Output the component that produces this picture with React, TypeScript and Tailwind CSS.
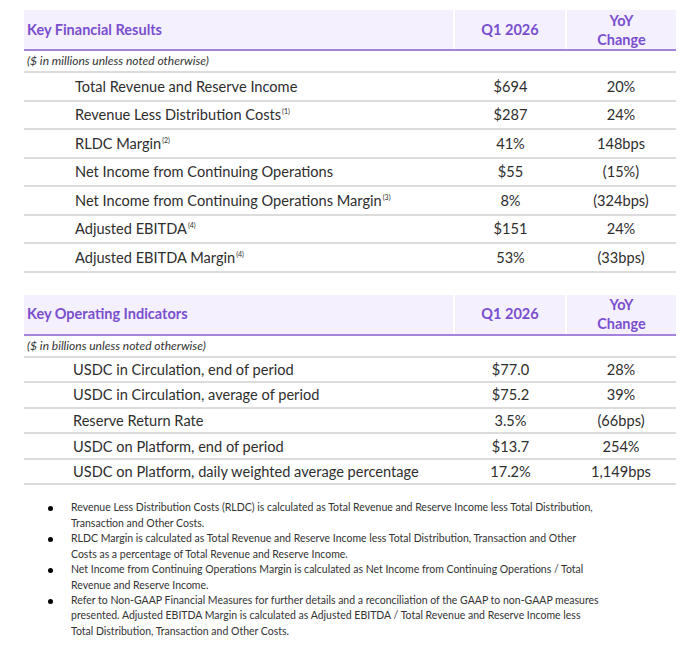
import React from "react"

type Row = { label: string; note?: string; value: string; change: string }

const financial: Row[] = [
  { label: "Total Revenue and Reserve Income", value: "$694", change: "20%" },
  { label: "Revenue Less Distribution Costs", note: "(1)", value: "$287", change: "24%" },
  { label: "RLDC Margin", note: "(2)", value: "41%", change: "148bps" },
  { label: "Net Income from Continuing Operations", value: "$55", change: "(15%)" },
  { label: "Net Income from Continuing Operations Margin", note: "(3)", value: "8%", change: "(324bps)" },
  { label: "Adjusted EBITDA", note: "(4)", value: "$151", change: "24%" },
  { label: "Adjusted EBITDA Margin", note: "(4)", value: "53%", change: "(33bps)" },
]

const operating: Row[] = [
  { label: "USDC in Circulation, end of period", value: "$77.0", change: "28%" },
  { label: "USDC in Circulation, average of period", value: "$75.2", change: "39%" },
  { label: "Reserve Return Rate", value: "3.5%", change: "(66bps)" },
  { label: "USDC on Platform, end of period", value: "$13.7", change: "254%" },
  { label: "USDC on Platform, daily weighted average percentage", value: "17.2%", change: "1,149bps" },
]

const notes: string[][] = [
  [
    "Revenue Less Distribution Costs (RLDC) is calculated as Total Revenue and Reserve Income less Total Distribution,",
    "Transaction and Other Costs.",
  ],
  [
    "RLDC Margin is calculated as Total Revenue and Reserve Income less Total Distribution, Transaction and Other",
    "Costs as a percentage of Total Revenue and Reserve Income.",
  ],
  [
    "Net Income from Continuing Operations Margin is calculated as Net Income from Continuing Operations / Total",
    "Revenue and Reserve Income.",
  ],
  [
    "Refer to Non-GAAP Financial Measures for further details and a reconciliation of the GAAP to non-GAAP measures",
    "presented. Adjusted EBITDA Margin is calculated as Adjusted EBITDA / Total Revenue and Reserve Income less",
    "Total Distribution, Transaction and Other Costs.",
  ],
]

function MetricsTable({
  title,
  unit,
  rows,
  rowClass,
  labelPad,
}: {
  title: string
  unit: string
  rows: Row[]
  rowClass: string
  labelPad: string
}) {
  return (
    <div className="w-[652px]">
      {/* Header */}
      <div className="grid grid-cols-[429px_110px_109px] gap-x-[2px] border-b-2 border-[#a383dc] h-[41px] text-[14.5px] font-bold text-[#7a4fcf]">
        <div className="bg-[#f4f0fd] flex items-center pl-[3px]">{title}</div>
        <div className="bg-[#f4f0fd] flex items-center justify-center">Q1 2026</div>
        <div className="bg-[#f4f0fd] flex flex-col items-center justify-center leading-[19px]">
          <span>YoY</span>
          <span>Change</span>
        </div>
      </div>

      {/* Unit line */}
      <div className="h-[22px] border-b-2 border-[#dcdcdc] flex items-center pl-[3px] text-[12px] italic text-[#333]">
        {unit}
      </div>

      {/* Rows */}
      {rows.map((row) => (
        <div
          key={row.label}
          className={`grid grid-cols-[431px_111px_110px] items-center border-b-2 border-[#dcdcdc] pt-[1px] text-[14.6px] text-[#2e2e2e] ${rowClass}`}
        >
          <div className={labelPad}>
            {row.label}
            {row.note && <sup className="text-[7px] -top-[6px] ml-[1px]">{row.note}</sup>}
          </div>
          <div className="text-center">{row.value}</div>
          <div className="text-center">{row.change}</div>
        </div>
      ))}
    </div>
  )
}

export default function App() {
  return (
    <div className="w-[688px] h-[645px] bg-white font-['Lato',sans-serif] pt-[10px] pl-[24px]">
      <MetricsTable
        title="Key Financial Results"
        unit="($ in millions unless noted otherwise)"
        rows={financial}
        rowClass="h-[28.5px]"
        labelPad="pl-[51px]"
      />

      <div className="mt-[22px]">
        <MetricsTable
          title="Key Operating Indicators"
          unit="($ in billions unless noted otherwise)"
          rows={operating}
          rowClass="h-[25.6px]"
          labelPad="pl-[49px]"
        />
      </div>

      {/* Footnotes */}
      <ul className="mt-[15px] text-[10.5px] leading-[15.4px] text-[#333]">
        {notes.map((lines, i) => (
          <li key={i} className="flex">
            <span className="w-[47px] shrink-0 flex justify-center pt-[6px] pl-[6px]">
              <span className="w-[5px] h-[5px] rounded-full bg-black" />
            </span>
            <span className="whitespace-nowrap">
              {lines.map((line, j) => (
                <span key={j} className="block">
                  {line}
                </span>
              ))}
            </span>
          </li>
        ))}
      </ul>
    </div>
  )
}
